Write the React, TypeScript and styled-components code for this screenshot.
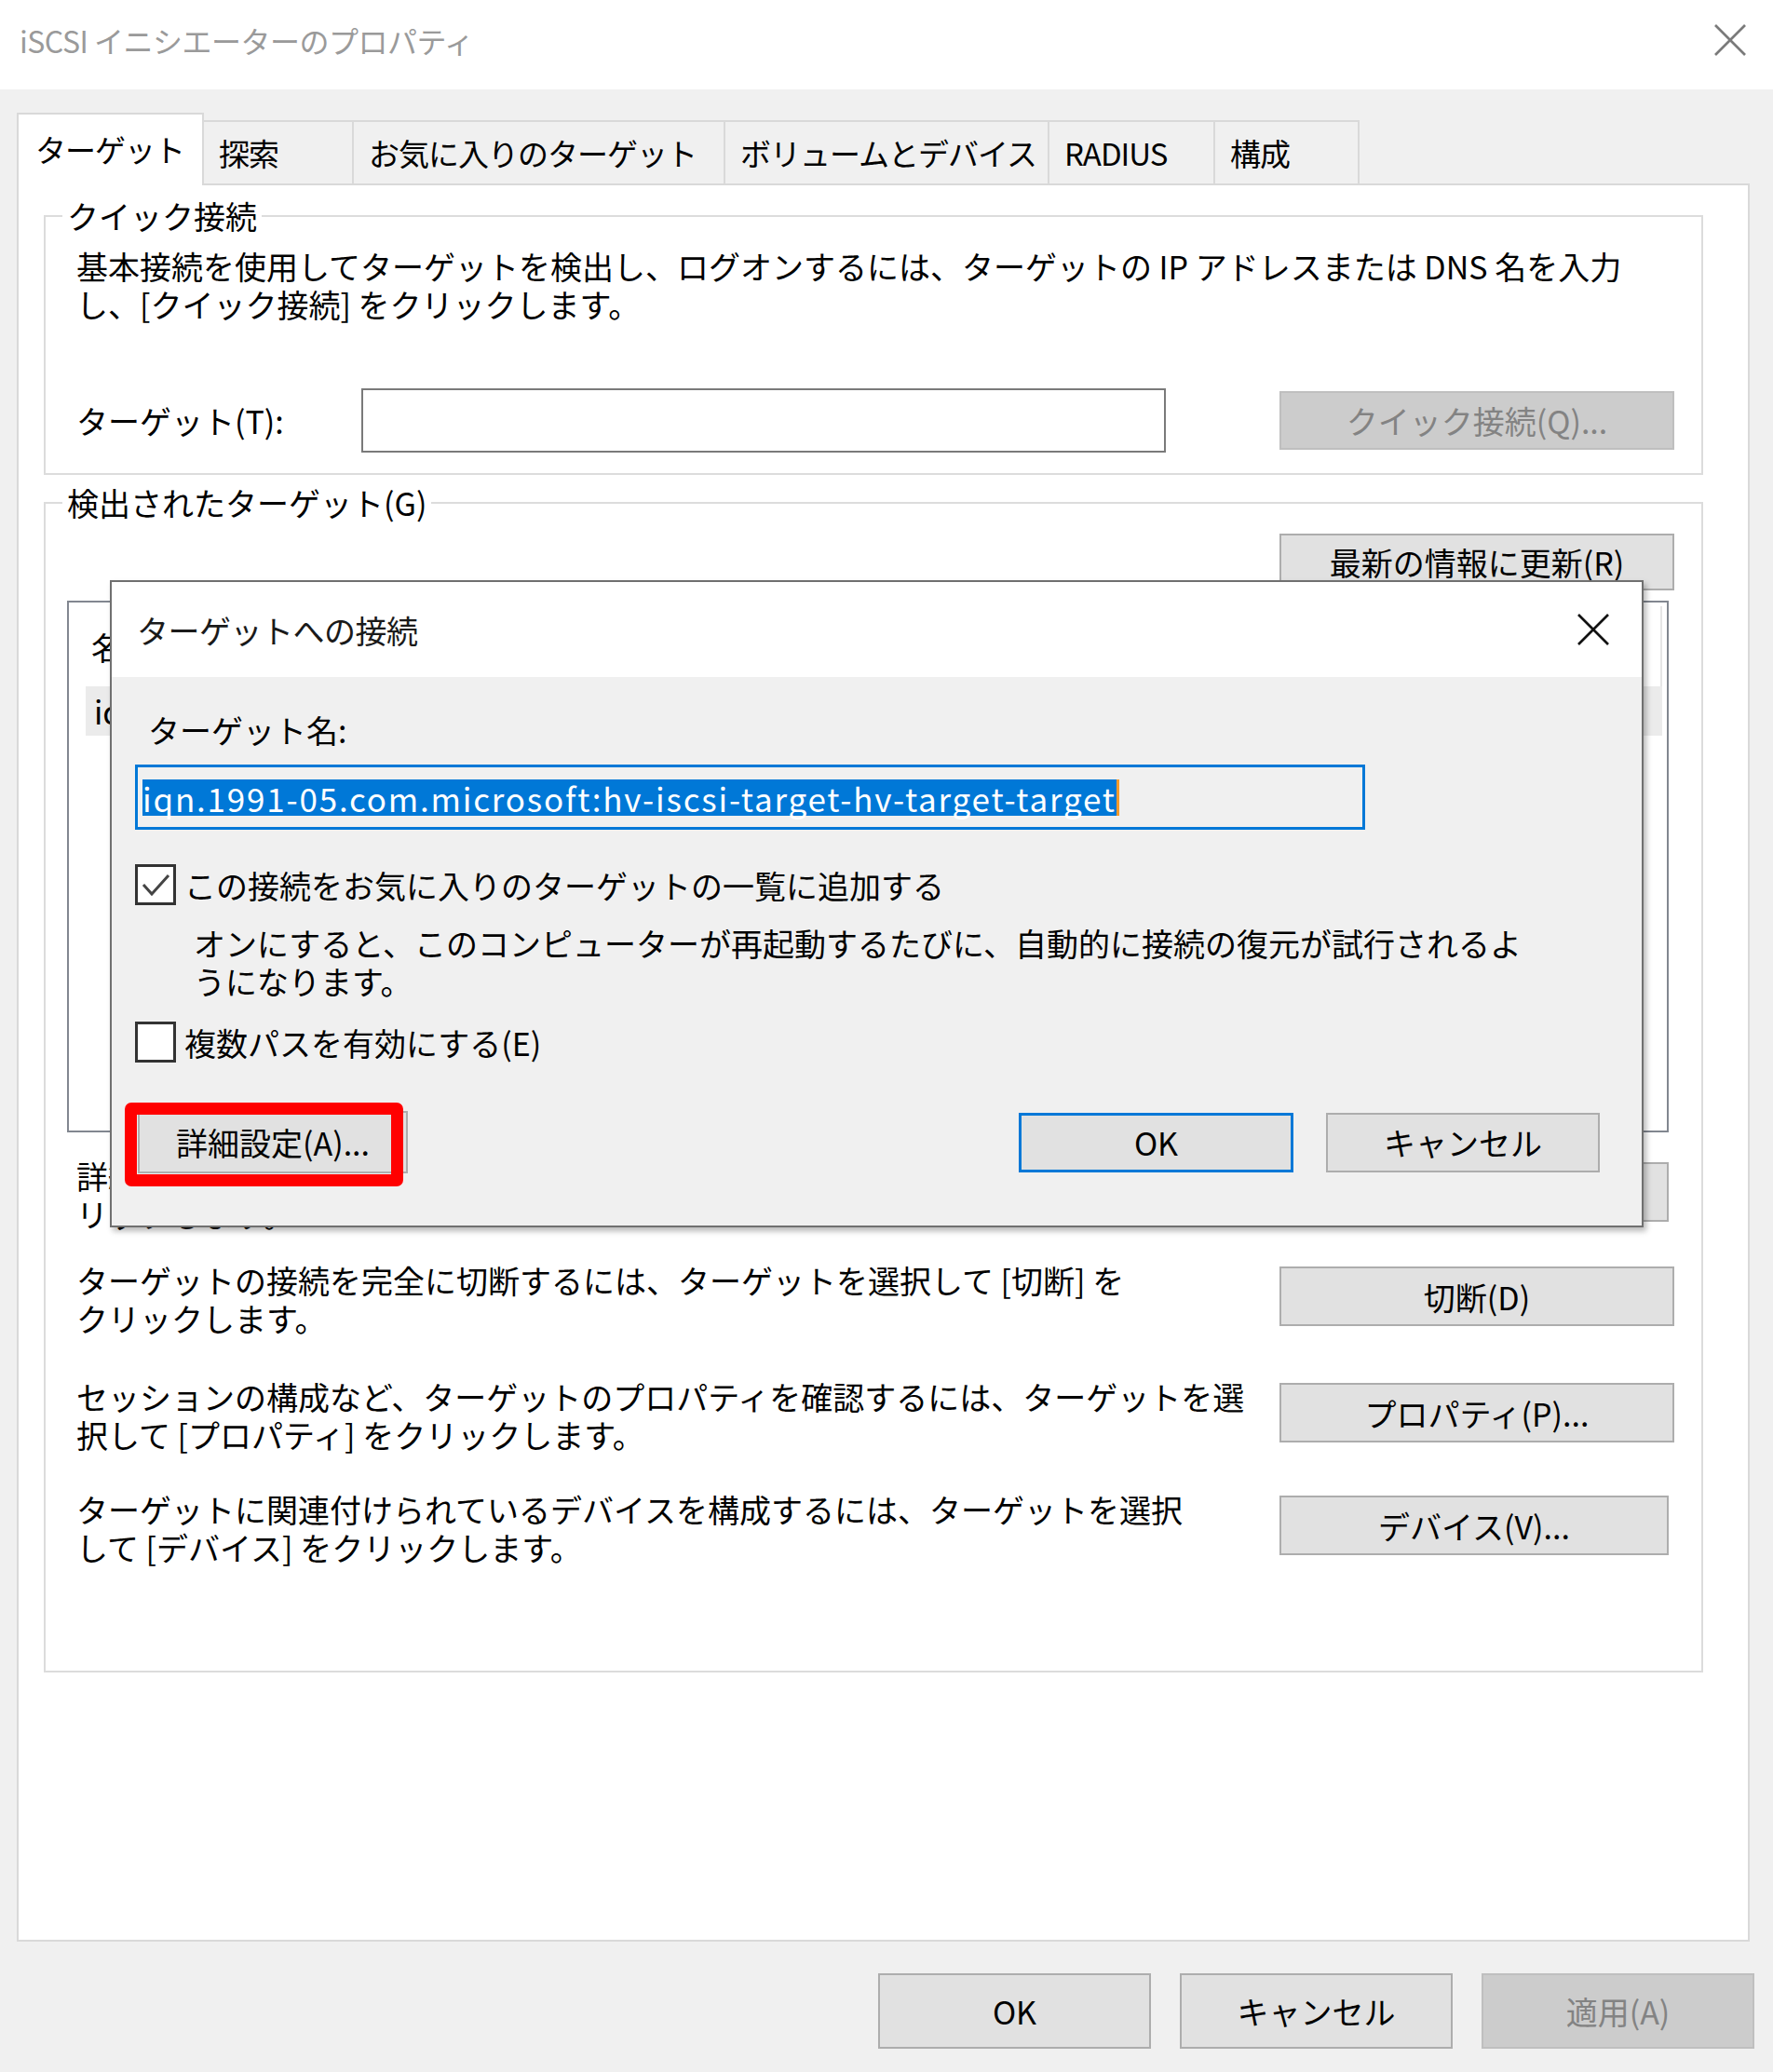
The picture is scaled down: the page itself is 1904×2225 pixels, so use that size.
import React from "react";
import styled, { createGlobalStyle, css } from "styled-components";

const GlobalStyle = createGlobalStyle`
  html, body {
    margin: 0;
    padding: 0;
    background: #f0f0f0;
  }
  body {
    font-family: "Noto Sans CJK JP", "Noto Sans", sans-serif;
  }
  * {
    box-sizing: border-box;
  }
`;

const Window = styled.div`
  position: relative;
  width: 1904px;
  height: 2225px;
  background: #f0f0f0;
  display: flex;
  flex-direction: column;
  font-family: "Noto Sans CJK JP", "Noto Sans", sans-serif;
  font-size: 34px;
  line-height: 41px;
  color: #000;
  overflow: hidden;
`;

const TitleBar = styled.div`
  height: 96px;
  flex-shrink: 0;
  background: #fff;
  display: flex;
  align-items: center;
  justify-content: space-between;
  padding: 0 28px 10px 21px;
`;

const TitleText = styled.div<{ $dim?: boolean }>`
  font-size: ${(p) => (p.$dim ? 32 : 34)}px;
  color: ${(p) => (p.$dim ? "#9a9a9a" : "#1a1a1a")};
  letter-spacing: -0.5px;
`;

const CloseGlyph = styled.svg<{ $color: string }>`
  width: 36px;
  height: 36px;
  stroke: ${(p) => p.$color};
  stroke-width: 2.6;
  fill: none;
`;

const Body = styled.div`
  flex: 1;
  display: flex;
  flex-direction: column;
  padding: 27px 25px 0 18px;
`;

const TabStrip = styled.div`
  display: flex;
  align-items: flex-end;
  height: 74px;
  position: relative;
  z-index: 1;
`;

const Tab = styled.div<{ $active?: boolean; $w: number }>`
  width: ${(p) => p.$w}px;
  border: 2px solid #d9d9d9;
  border-bottom: none;
  white-space: nowrap;
  display: flex;
  align-items: center;
  font-size: 33px;
  letter-spacing: -1px;
  ${(p) =>
    p.$active
      ? css`
          height: 78px;
          margin-bottom: -2px;
          background: #fff;
          padding: 0 0 2px 18px;
        `
      : css`
          height: 68px;
          margin-left: -2px;
          background: #f0f0f0;
          padding: 0 0 0 16px;
        `}
`;

const Panel = styled.div`
  height: 1888px;
  background: #fff;
  border: 2px solid #d9d9d9;
  display: flex;
  flex-direction: column;
`;

const GroupBox = styled.fieldset<{ $top: number; $bottom: number }>`
  margin: ${(p) => p.$top}px 48px 0 27px;
  padding: 13px 29px ${(p) => p.$bottom}px 23px;
  border: 2px solid #dcdcdc;
  min-width: 0;
`;

const Legend = styled.legend`
  padding: 0 5px;
  margin-left: -5px;
  line-height: 41px;
`;

const GroupContent = styled.div`
  display: flex;
  flex-direction: column;
`;

const Para = styled.div<{ $indent?: number }>`
  margin-left: ${(p) => p.$indent ?? 10}px;
  white-space: nowrap;
`;

const FieldRow = styled.div`
  display: flex;
  align-items: center;
  margin-top: 70px;
`;

const FieldLabel = styled.div`
  width: 316px;
  padding-left: 10px;
  white-space: nowrap;
`;

const TextBox = styled.div`
  width: 864px;
  height: 69px;
  border: 2px solid #7a7a7a;
  background: #fff;
`;

const Button = styled.div<{
  $w: number;
  $h?: number;
  $disabled?: boolean;
  $default?: boolean;
}>`
  width: ${(p) => p.$w}px;
  height: ${(p) => p.$h ?? 64}px;
  flex-shrink: 0;
  display: flex;
  align-items: center;
  justify-content: center;
  white-space: nowrap;
  background: ${(p) => (p.$disabled ? "#cccccc" : "#e1e1e1")};
  color: ${(p) => (p.$disabled ? "#838383" : "#000")};
  border: ${(p) =>
    p.$default
      ? "3px solid #0078d7"
      : p.$disabled
      ? "2px solid #bfbfbf"
      : "2px solid #adadad"};
`;

const RightButton = styled(Button)`
  align-self: flex-end;
`;

const PushRight = styled.div`
  margin-left: auto;
`;

const ListBox = styled.div`
  margin-top: 11px;
  margin-right: 6px;
  height: 571px;
  border: 2px solid #828790;
  background: #fff;
  display: flex;
  flex-direction: column;
`;

const ListHeader = styled.div`
  height: 86px;
  display: flex;
  align-items: center;
  padding-left: 24px;
  border-right: 2px solid #e5e5e5;
  margin-right: 5px;
  margin-top: 4px;
`;

const ListRow = styled.div`
  height: 53px;
  margin: 0 5px 0 18px;
  background: #ebebeb;
  display: flex;
  align-items: center;
  padding-left: 9px;
  white-space: nowrap;
  overflow: hidden;
`;

const ActionRow = styled.div<{ $top: number }>`
  display: flex;
  justify-content: space-between;
  align-items: flex-start;
  margin-top: ${(p) => p.$top}px;
`;

const ActionButton = styled(Button)`
  margin-top: 6px;
  margin-right: ${(p) => 424 - p.$w}px;
`;

const Footer = styled.div`
  display: flex;
  justify-content: flex-end;
  gap: 31px;
  margin: 34px -5px 0 0;
`;

/* dialog lying over the property page */
const Dialog = styled.div`
  position: absolute;
  left: 118px;
  top: 623px;
  width: 1647px;
  height: 695px;
  border: 2px solid #707070;
  background: #f0f0f0;
  box-shadow: 3px 4px 6px rgba(0, 0, 0, 0.28);
  display: flex;
  flex-direction: column;
  z-index: 5;
`;

const DialogTitle = styled.div`
  height: 102px;
  background: #fff;
  display: flex;
  align-items: center;
  justify-content: space-between;
  padding: 0 34px 0 27px;
`;

const DialogBody = styled.div`
  flex: 1;
  display: flex;
  flex-direction: column;
  padding: 36px 45px 0 25px;
`;

const SelectedInput = styled.div`
  margin-top: 17px;
  width: 1321px;
  height: 70px;
  border: 3px solid #0078d7;
  background: #f0f0f0;
  display: flex;
  align-items: center;
  padding-left: 5px;
`;

const Selection = styled.span`
  background: #0078d7;
  color: #fff;
  font-size: 35px;
  line-height: 39px;
  letter-spacing: 1.8px;
  white-space: nowrap;
  border-right: 3px solid #f39a2c;
`;

const CheckRow = styled.div<{ $top: number }>`
  display: flex;
  align-items: center;
  gap: 9px;
  margin-top: ${(p) => p.$top}px;
  white-space: nowrap;
`;

const CheckBox = styled.div`
  width: 44px;
  height: 44px;
  border: 3px solid #333;
  background: #fff;
  display: flex;
  align-items: center;
  justify-content: center;
`;

const DialogButtons = styled.div`
  display: flex;
  align-items: center;
  gap: 35px;
  margin-top: 52px;
`;

const Marked = styled.div`
  position: relative;
  margin-left: 3px;
`;

/* red annotation frame drawn over the button */
const RedFrame = styled.div`
  position: absolute;
  top: -9px;
  left: -14px;
  right: 5px;
  bottom: -14px;
  border: 13px solid #ff0000;
  border-radius: 7px;
`;

const Close = ({ color }: { color: string }) => (
  <CloseGlyph $color={color} viewBox="0 0 36 36">
    <line x1="2" y1="2" x2="34" y2="34" />
    <line x1="34" y1="2" x2="2" y2="34" />
  </CloseGlyph>
);

const tabs = [
  { label: "ターゲット", w: 201, active: true },
  { label: "探索", w: 163 },
  { label: "お気に入りのターゲット", w: 401 },
  { label: "ボリュームとデバイス", w: 350 },
  { label: "RADIUS", w: 180 },
  { label: "構成", w: 157 },
];

const actions = [
  {
    lines: ["詳細オプションを使用して接続するには、ターゲットを選択して [接続] をク", "リックします。"],
    button: "接続(N)",
    w: 418,
    top: 26,
  },
  {
    lines: ["ターゲットの接続を完全に切断するには、ターゲットを選択して [切断] を", "クリックします。"],
    button: "切断(D)",
    w: 424,
    top: 30,
  },
  {
    lines: ["セッションの構成など、ターゲットのプロパティを確認するには、ターゲットを選", "択して [プロパティ] をクリックします。"],
    button: "プロパティ(P)...",
    w: 424,
    top: 43,
  },
  {
    lines: ["ターゲットに関連付けられているデバイスを構成するには、ターゲットを選択", "して [デバイス] をクリックします。"],
    button: "デバイス(V)...",
    w: 418,
    top: 39,
  },
];

const App = () => {
  return (
    <>
      <GlobalStyle />
      <Window>
        <TitleBar>
          <TitleText $dim>iSCSI イニシエーターのプロパティ</TitleText>
          <Close color="#7a7a7a" />
        </TitleBar>
        <Body>
          <TabStrip>
            {tabs.map((t) => (
              <Tab key={t.label} $w={t.w} $active={t.active}>
                {t.label}
              </Tab>
            ))}
          </TabStrip>
          <Panel>
            <GroupBox $top={12} $bottom={22}>
              <Legend>クイック接続</Legend>
              <GroupContent>
                <Para>
                  基本接続を使用してターゲットを検出し、ログオンするには、ターゲットの IP アドレスまたは DNS 名を入力
                  <br />
                  し、[クイック接続] をクリックします。
                </Para>
                <FieldRow>
                  <FieldLabel>ターゲット(T):</FieldLabel>
                  <TextBox />
                  <PushRight>
                    <Button $w={424} $h={63} $disabled>
                      クイック接続(Q)...
                    </Button>
                  </PushRight>
                </FieldRow>
              </GroupContent>
            </GroupBox>
            <GroupBox $top={9} $bottom={112}>
              <Legend>検出されたターゲット(G)</Legend>
              <GroupContent>
                <RightButton $w={424} $h={61}>
                  最新の情報に更新(R)
                </RightButton>
                <ListBox>
                  <ListHeader>名前</ListHeader>
                  <ListRow>iqn.1991-05.com.microsoft:hv-iscsi-target-hv-target-target</ListRow>
                </ListBox>
                {actions.map((a) => (
                  <ActionRow key={a.button} $top={a.top}>
                    <Para>
                      {a.lines[0]}
                      <br />
                      {a.lines[1]}
                    </Para>
                    <ActionButton $w={a.w}>{a.button}</ActionButton>
                  </ActionRow>
                ))}
              </GroupContent>
            </GroupBox>
          </Panel>
          <Footer>
            <Button $w={293} $h={81}>OK</Button>
            <Button $w={293} $h={81}>キャンセル</Button>
            <Button $w={293} $h={81} $disabled>
              適用(A)
            </Button>
          </Footer>
        </Body>

        <Dialog>
          <DialogTitle>
            <TitleText>ターゲットへの接続</TitleText>
            <Close color="#111" />
          </DialogTitle>
          <DialogBody>
            <Para $indent={14}>ターゲット名:</Para>
            <SelectedInput>
              <Selection>iqn.1991-05.com.microsoft:hv-iscsi-target-hv-target-target</Selection>
            </SelectedInput>
            <CheckRow $top={37}>
              <CheckBox>
                <svg width="34" height="34" viewBox="0 0 34 34">
                  <polyline
                    points="4,17 13,27 31,7"
                    fill="none"
                    stroke="#444"
                    strokeWidth="3"
                  />
                </svg>
              </CheckBox>
              この接続をお気に入りのターゲットの一覧に追加する
            </CheckRow>
            <Para $indent={63} style={{ marginTop: 20 }}>
              オンにすると、このコンピューターが再起動するたびに、自動的に接続の復元が試行されるよ
              <br />
              うになります。
            </Para>
            <CheckRow $top={23}>
              <CheckBox />
              複数パスを有効にする(E)
            </CheckRow>
            <DialogButtons>
              <Marked>
                <Button $w={290} $h={67}>
                  詳細設定(A)...
                </Button>
                <RedFrame />
              </Marked>
              <PushRight>
                <Button $w={295} $h={64} $default>
                  OK
                </Button>
              </PushRight>
              <Button $w={294} $h={64}>
                キャンセル
              </Button>
            </DialogButtons>
          </DialogBody>
        </Dialog>
      </Window>
    </>
  );
};

export default App;
